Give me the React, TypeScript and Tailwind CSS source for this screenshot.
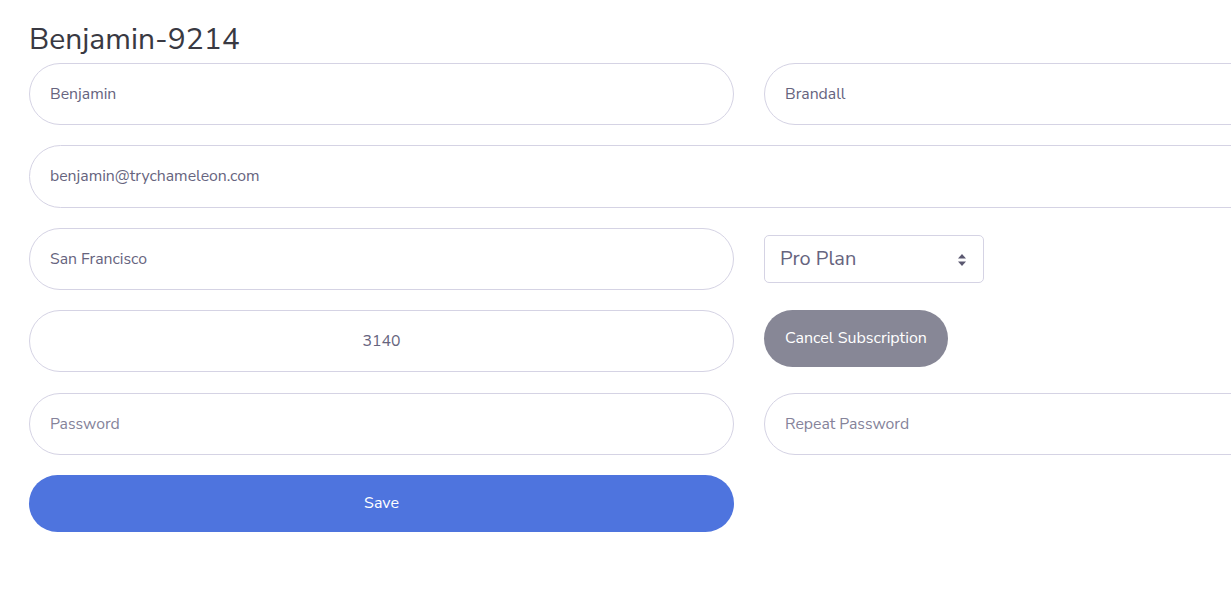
import React from "react";

const inputCls =
  "h-[62px] w-full rounded-full border border-[#d5d3e4] bg-white px-[20px] text-[15.8px] text-[#66647e] outline-none placeholder:text-[#85839a]";

export default function App() {
  return (
    <div className="h-[599px] w-[1231px] overflow-hidden bg-white" style={{ fontFamily: '"Nunito Sans", "Open Sans", "Liberation Sans", sans-serif' }}>
      <div className="w-[1500px] pl-[29px]">
        <h1 className="pt-[22px] text-[30px] leading-[36px] text-[#393942]">Benjamin-9214</h1>
        <div className="mt-[5px] flex flex-col gap-[20px]">
          <div className="flex gap-[30px]">
            <div className="w-[705px] shrink-0"><input className={inputCls} defaultValue="Benjamin" /></div>
            <div className="w-[705px] shrink-0"><input className={inputCls} defaultValue="Brandall" /></div>
          </div>
          <div className="flex w-[1440px]">
            <input className={inputCls + " h-[63px] pb-[2px]"} defaultValue="benjamin@trychameleon.com" />
          </div>
          <div className="flex items-center gap-[30px]">
            <div className="w-[705px] shrink-0"><input className={inputCls} defaultValue="San Francisco" /></div>
            <div className="relative h-[48px] w-[220px] shrink-0 rounded-[5px] border border-[#d5d3e4] bg-white">
              <span className="absolute left-[15px] top-[10px] text-[20px] leading-[26px] text-[#66647e]">Pro Plan</span>
              <svg className="absolute right-[16px] top-[17px]" width="10" height="14" viewBox="0 0 10 14">
                <path d="M5 1 L9 5.5 H1 Z" fill="#5a5870" />
                <path d="M5 13 L9 8.5 H1 Z" fill="#5a5870" />
              </svg>
            </div>
          </div>
          <div className="flex items-start gap-[30px]">
            <div className="w-[705px] shrink-0"><input className={inputCls + " text-center"} defaultValue="3140" /></div>
            <button className="h-[57px] rounded-full bg-[#878796] px-[21px] pb-[2px] text-[16px] text-white">Cancel Subscription</button>
          </div>
          <div className="mt-[1px] flex gap-[30px]">
            <div className="w-[705px] shrink-0"><input className={inputCls} placeholder="Password" /></div>
            <div className="w-[705px] shrink-0"><input className={inputCls} placeholder="Repeat Password" /></div>
          </div>
          <div className="flex">
            <button className="h-[57px] w-[705px] rounded-full bg-[#4e74de] pb-[2px] text-[16px] text-white">Save</button>
          </div>
        </div>
      </div>
    </div>
  );
}
